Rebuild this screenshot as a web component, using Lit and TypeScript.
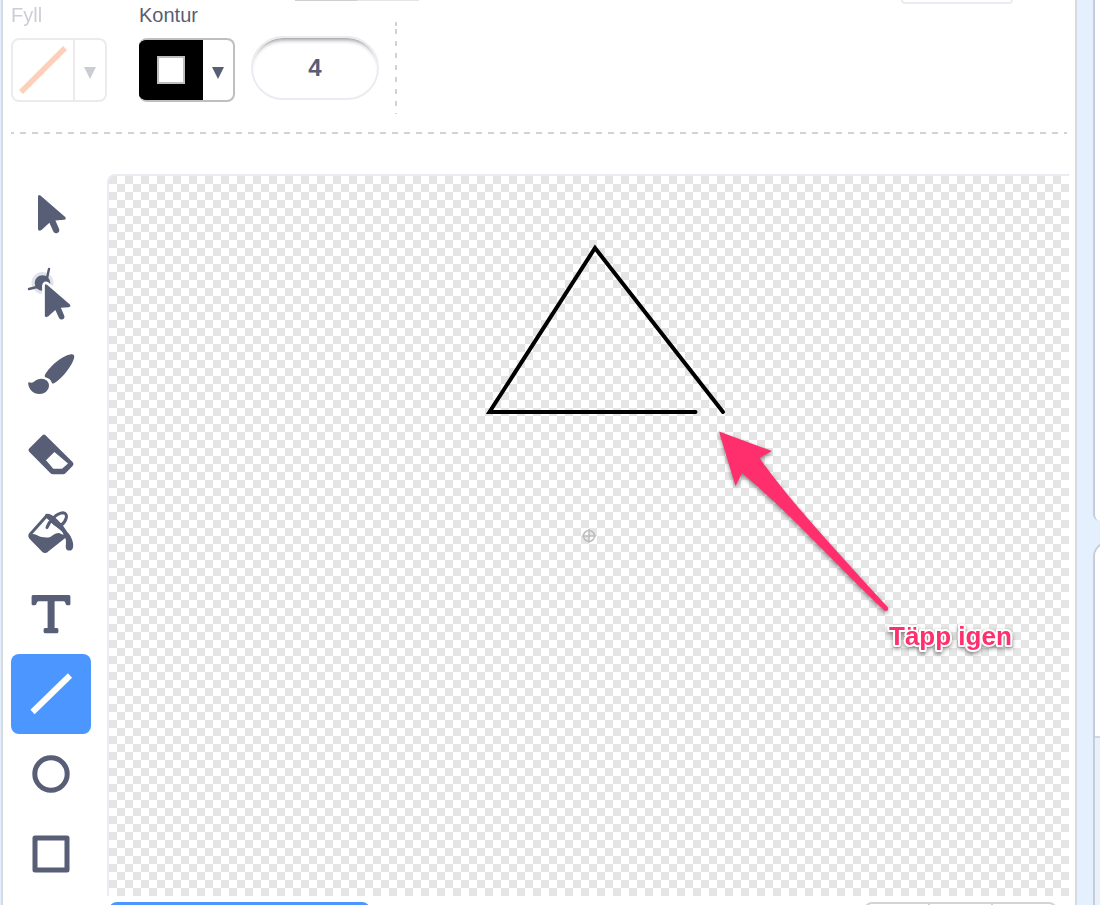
import { LitElement, html, svg, css } from "lit";
import { customElement, state } from "lit/decorators.js";

const ARROW =
  "M27 22.5q.2-2.6 2.4-1L54.2 43q1.6 2.2-1.2 2.8l-8.6.8 3.6 8.2q1.2 3-1.6 4.2-3 1-4.2-1.8l-3.8-8.4-7.6 7q-3.2 2-3.8-.6z";

const TOOLS = [
  { id: "select", label: "Markera", art: svg`<path d=${ARROW} />` },
  {
    id: "reshape",
    label: "Omforma",
    art: svg`
      <circle cx="31.5" cy="29" r="11" fill="#e1e3ea" />
      <circle cx="31.5" cy="29" r="7.8" />
      <path d="M38 15l-2 9M18 35l8-2" fill="none" stroke="currentColor" stroke-width="2.4" stroke-linecap="round" />
      <path d=${ARROW} transform="translate(9 11) scale(.92)" stroke="#fff" stroke-width="6" stroke-linejoin="round" />
      <path d=${ARROW} transform="translate(9 11) scale(.92)" />`,
  },
  {
    id: "brush",
    label: "Pensel",
    art: svg`
      <path d="M33.8 41.5C37 34 50 22 60 20.2q3.6-.4 3.2 3C62 31 50 46 42.5 49.4q-1.5.6-1.8-.8-1.2-4.2-5.8-5.2-1.6-.5-1.1-1.9z" />
      <path d="M17.2 50q-.6-2.400 1.800-1.600 2.600.8 4.600-1.200C27 44 34 43.600 37 48c3.200 5.600-1.600 12-8.600 12-6.400 0-10.400-4.600-11.200-10z" />`,
  },
  {
    id: "eraser",
    label: "Suddgummi",
    art: svg`
      <path fill-rule="evenodd" d="M31.500 21.300q1.500-1.400 3 0L61.800 48.300q1.500 1.700 0 3.400l-7.300 7.500q-1 1-2.500 1H42q-1.500 0-2.500-1L18.200 37.700q-1.500-1.700 0-3.200zM43.400 38L35 46.200l7.300 8.600H51l6-5.200z" />`,
  },
  {
    id: "fill",
    label: "Fyll",
    art: svg`
      <path d="M35.500 22L19.500 40q-1.500 2 .3 4L32 56.500q2 1.700 4 .2L53 43l2-4z" fill="none" stroke="currentColor" stroke-width="3" stroke-linejoin="round" />
      <path d="M19 41c5-3 7 2.600 16.500 2.600 6 0 6.500-4.600 12.500-4.600l7 3L36 57q-2 1.500-4 0L19 44z" />
      <path d="M35.500 21.500c4-1.500 15 9 19 16.500M36 33.500C38 27 46 19 52 18.800c6 .4 3.500 8.600-2.500 13.200M38 22.500c1.500 4 6 8 9.500 10" fill="none" stroke="currentColor" stroke-width="3" stroke-linecap="round" />
      <path d="M50 35q8 2 11 10.500c1.500 4 1.500 7 .6 9.200-1.200 2.700-5.700 2.500-6.600-.3-.8-3.500 1-7-1-11z" />`,
  },
  {
    id: "text",
    label: "Text",
    art: svg`
      <path d="M22 21h36q1.400 0 1.400 1.500V30q0 1.300-1.400 1.300h-1.600q-1.800 0-2-2.300-.2-1.800-2-1.800h-8.800V54H46q1.400.2 1.400 1.800v2q0 1.400-1.400 1.400H34q-1.400 0-1.400-1.400v-2q0-1.600 1.400-1.800h2.600V27.200h-8.900q-1.700 0-2 1.800-.2 2.300-2 2.300H22q-1.400 0-1.400-1.300v-7.500Q20.600 21 22 21z" />`,
  },
  {
    id: "line",
    label: "Linje",
    art: svg`<path d="M21.500 58L59 21.500" stroke="currentColor" stroke-width="6" />`,
  },
  {
    id: "circle",
    label: "Cirkel",
    art: svg`<circle cx="40" cy="40" r="16.200" fill="none" stroke="currentColor" stroke-width="5" />`,
  },
  {
    id: "rect",
    label: "Rektangel",
    art: svg`<rect x="24" y="24" width="32" height="32" fill="none" stroke="currentColor" stroke-width="5" stroke-linejoin="round" />`,
  },
];

@customElement("app-root")
export class AppRoot extends LitElement {
  @state() private tool = "line";

  static styles = css`
    :host {
      display: block;
      height: 100vh;
      overflow: hidden;
      background: #e5f0ff;
      color: #575e75;
      font-family: "Liberation Sans", Arial, Helvetica, sans-serif;
    }
    * { box-sizing: border-box; }
    button, input {
      font: inherit;
      color: inherit;
      margin: 0;
      padding: 0;
      border: 0;
      background: none;
    }
    svg { display: block; }
    .page { display: flex; height: 100%; padding-left: 1px; }
    .editor {
      flex: 1;
      min-width: 0;
      background: #fff;
      border: solid #d6dbe2;
      border-width: 0 2px;
      padding: 0 6px 0 8px;
    }
    .top {
      display: flex;
      justify-content: space-between;
      height: 4px;
      padding: 0 56px 0 284px;
    }
    .name { width: 124px; height: 1px; background: linear-gradient(90deg, #cfcfcf 50%, #e4e4e4 0); }
    .group { width: 112px; border: 2px solid #e9ecf1; border-top: 0; border-radius: 0 0 8px 8px; }
    .bar { display: flex; align-items: flex-start; padding-bottom: 18px; }
    .field { display: flex; flex-direction: column; gap: 12px; margin-right: 32px; }
    .field.outline { margin-right: 16px; }
    .field.off { opacity: .3; }
    .field label { font-size: 20px; line-height: 22px; }
    .swatch {
      display: flex;
      width: 96px;
      height: 64px;
      border: 2px solid #bfbfbf;
      border-radius: 8px;
      overflow: hidden;
    }
    .color { width: 62px; height: 60px; display: grid; place-items: center; border-right: 2px solid #bfbfbf; }
    .outline .swatch { background: linear-gradient(90deg, #000 64px, #fff 0) border-box; border-left: 0; }
    .outline .color { width: 64px; height: 64px; border: 0; margin: -2px 0; background: #000; }
    .square { width: 28px; height: 28px; background: #fff; border: 2px solid #bfbfbf; }
    .caret { flex: 1; height: 60px; display: grid; place-items: center; padding-top: 6px; }
    .width {
      width: 128px;
      height: 64px;
      margin: 32px 16px 0 0;
      border: 2px solid #e9ecf1;
      border-radius: 32px;
      text-align: center;
      font-size: 24px;
      font-weight: 700;
      box-shadow: inset 0 6px 4px -4px #999;
    }
    .divider {
      width: 2px;
      height: 92px;
      margin-top: 18px;
      background:
        linear-gradient(#d2d2d2, #d2d2d2) 0 0 / 2px 4px no-repeat,
        repeating-linear-gradient(transparent 0 7px, #d2d2d2 7px 12px);
    }
    .rule {
      height: 2px;
      margin-right: 2px;
      background: repeating-linear-gradient(90deg, #d2d2d2 0 3px, transparent 3px 9px, #d2d2d2 9px 12px);
    }
    .work { display: flex; align-items: flex-start; gap: 16px; padding-top: 40px; }
    .tools { display: flex; flex-direction: column; }
    .tool { width: 80px; height: 80px; border-radius: 8px; }
    .tool.on { background: #4c97ff; color: #fff; }
    .main { flex: 1; min-width: 0; }
    .canvas {
      border: solid #e9ecf1;
      border-width: 2px 0 0 2px;
      border-radius: 8px 0 0 0;
      background: conic-gradient(#fff 25%, #e5e5e5 0 50%, #fff 0 75%, #e5e5e5 0) 0 0 / 16px 16px;
    }
    .canvas svg { width: 100%; height: auto; }
    .note {
      font-size: 26px;
      font-weight: 700;
      fill: #ff2f6e;
      stroke: #fff;
      stroke-width: 4px;
      stroke-linejoin: round;
      paint-order: stroke;
    }
    .shadow { filter: drop-shadow(0 2px 2px rgb(0 0 0 / 45%)); }
    .foot { display: flex; justify-content: space-between; padding: 6px 12px 0 2px; }
    .convert { width: 261px; height: 40px; border-radius: 8px; background: #4c97ff; }
    .zoom { display: flex; width: 193px; height: 40px; border: 2px solid #d3d3d3; border-radius: 8px; }
    .zoom button { flex: 1; }
    .zoom button + button { border-left: 2px solid #d3d3d3; }
    .side { width: 23px; display: flex; flex-direction: column; gap: 20px; padding-left: 16px; overflow: hidden; }
    .stage { flex: none; height: 521px; border-left: 2px solid #c6ccd8; border-radius: 0 0 0 8px; background: #fff; }
    .sprite {
      flex: 1;
      width: 40px;
      border: 2px solid #c6ccd8;
      border-bottom: 0;
      border-radius: 16px 0 0 0;
      background: #e9f1fc;
      overflow: hidden;
    }
    .info { height: 195px; background: #fff; border-bottom: 2px solid #d3d7df; }
  `;

  private caret() {
    return html`<svg width="12" height="12" viewBox="0 0 12 12" fill="currentColor" aria-hidden="true">
      <path d="M0 0h12L6 12z" />
    </svg>`;
  }

  render() {
    return html`
      <div class="page">
        <main class="editor">
          <div class="top"><div class="name"></div><div class="group"></div></div>
          <div class="bar">
            <div class="field off">
              <label for="fill">Fyll</label>
              <button class="swatch" id="fill">
                <span class="color">
                  <svg width="52" height="52" viewBox="0 0 52 52"><path d="M4 48L48 4" stroke="#ff661a" stroke-width="5.500" /></svg>
                </span>
                <span class="caret">${this.caret()}</span>
              </button>
            </div>
            <div class="field outline">
              <label for="stroke">Kontur</label>
              <button class="swatch" id="stroke">
                <span class="color"><span class="square"></span></span>
                <span class="caret">${this.caret()}</span>
              </button>
            </div>
            <input class="width" type="text" aria-label="Konturbredd" value="4" />
            <div class="divider"></div>
          </div>
          <div class="rule"></div>
          <div class="work">
            <div class="tools">
              ${TOOLS.map(
                (t) => html`<button
                  class="tool ${t.id === this.tool ? "on" : ""}"
                  aria-label=${t.label}
                  aria-pressed=${t.id === this.tool}
                  @click=${() => (this.tool = t.id)}
                >
                  <svg width="80" height="80" viewBox="0 0 80 80" fill="currentColor">${t.art}</svg>
                </button>`
              )}
            </div>
            <div class="main">
              <div class="canvas">
                <svg viewBox="0 0 960 720">
                  <g fill="none" stroke="#bdbdbd" stroke-width="1.500">
                    <circle cx="480" cy="360" r="5.500" />
                    <path d="M480 353v14M473 360h14" />
                  </g>
                  <path d="M586.500 236H380.500L486 72l128 164" fill="none" stroke="#000" stroke-width="4" stroke-linecap="round" />
                  <path
                    class="shadow"
                    fill="#ff2f6e"
                    d="M610 255.500l53 19.500-12.500 7C680 324 724 371 779 431.500q1 4-3 3.500C720 382 684 340 633 297l-6.500 13z"
                  />
                  <g class="shadow"><text class="note" x="780" y="469">Täpp igen</text></g>
                </svg>
              </div>
              <div class="foot">
                <button class="convert" aria-label="Gör till bitmapp"></button>
                <div class="zoom">
                  <button aria-label="Zooma ut"></button>
                  <button aria-label="Återställ zoom"></button>
                  <button aria-label="Zooma in"></button>
                </div>
              </div>
            </div>
          </div>
        </main>
        <aside class="side">
          <div class="stage"></div>
          <div class="sprite"><div class="info"></div></div>
        </aside>
      </div>
    `;
  }
}
